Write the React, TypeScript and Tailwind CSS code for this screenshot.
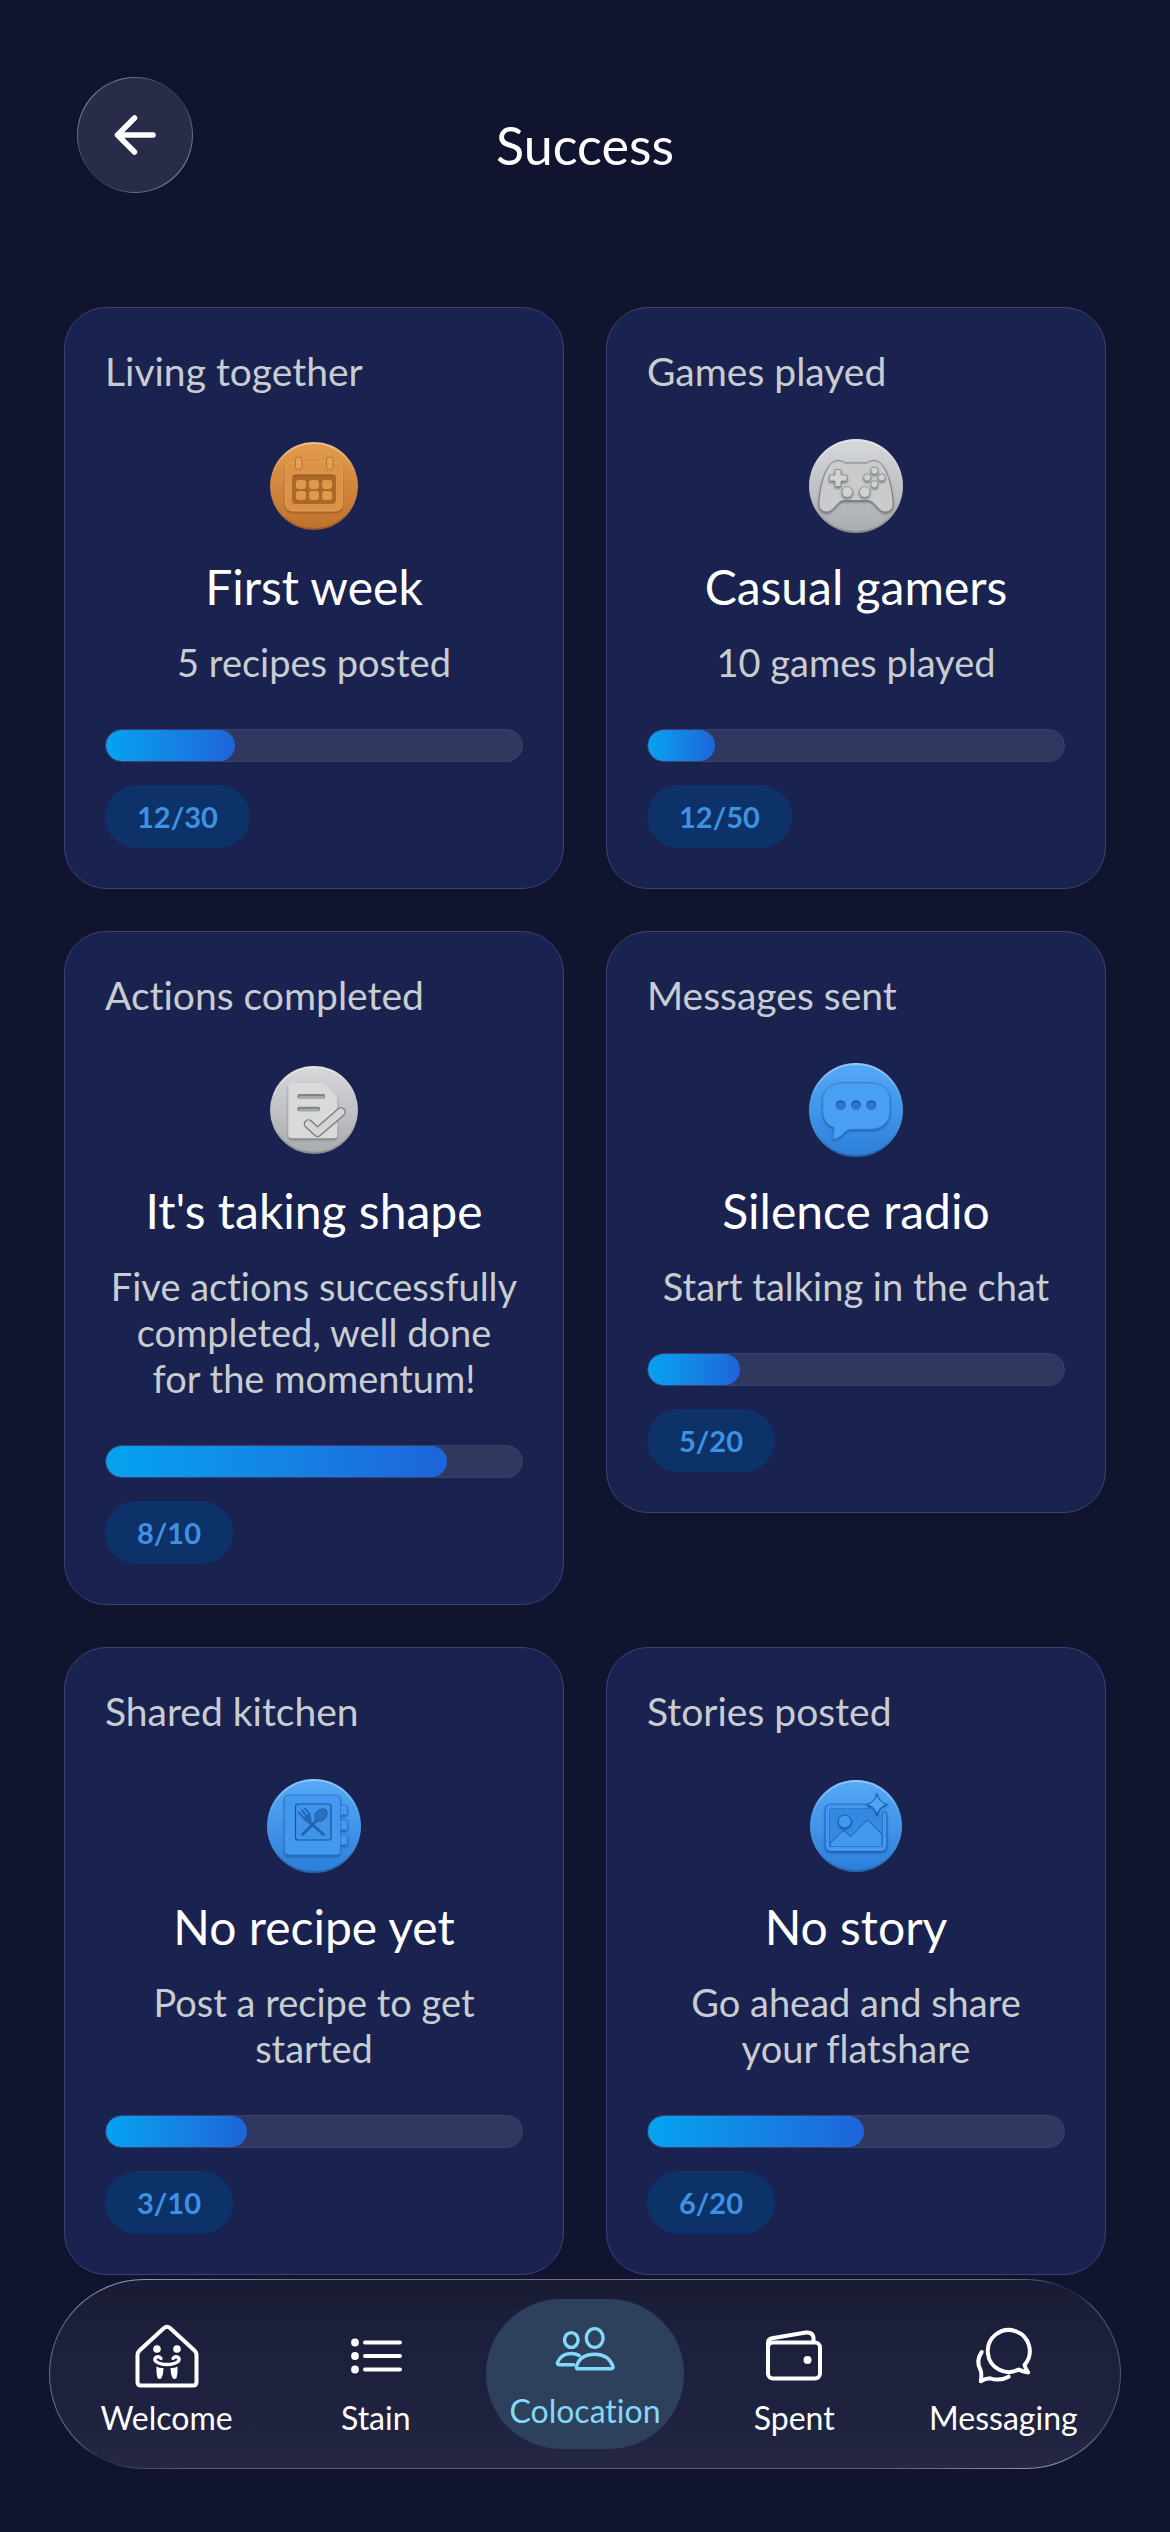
import { useState } from 'react'
import type { FC, ReactNode } from 'react'
import clsx from 'clsx'

type Tone = 'bronze' | 'silver' | 'blue'

interface Achievement {
  id: string
  category: string
  title: string
  description: string
  score: string
  percent: number
  medal: ReactNode
}

interface NavItem {
  id: string
  label: string
  icon: ReactNode
}

const TONES: Record<Tone, { top: string; bottom: string; face: string; line: string; deep: string }> = {
  bronze: { top: '#e39c4e', bottom: '#c0722b', face: '#dc9347', line: '#8f5018', deep: '#ac6829' },
  silver: { top: '#d6d8da', bottom: '#a9acaf', face: '#d0d2d4', line: '#63676b', deep: '#8d9194' },
  blue: { top: '#57aaf6', bottom: '#2c7fda', face: '#4299ef', line: '#15559f', deep: '#2467b4' }
}

const Medal: FC<{ id: string; tone: Tone; radius: number; children: ReactNode }> = ({ id, tone, radius, children }) => {
  const { top, bottom, line } = TONES[tone]
  return (
    <svg className="h-24 w-24" viewBox="0 0 96 96" fill="none" aria-hidden="true">
      <defs>
        <linearGradient id={`${id}-disc`} x1="0" y1="0" x2="0" y2="1">
          <stop offset="0" stopColor={top} />
          <stop offset="1" stopColor={bottom} />
        </linearGradient>
        <linearGradient id={`${id}-rim`} x1="0" y1="0" x2="0" y2="1">
          <stop offset="0" stopColor="#fff" stopOpacity="0.35" />
          <stop offset="0.4" stopColor="#fff" stopOpacity="0" />
          <stop offset="1" stopColor="#000" stopOpacity="0.2" />
        </linearGradient>
        <filter id={`${id}-raise`} x="-20%" y="-20%" width="140%" height="150%">
          <feDropShadow dx="0" dy="1.5" stdDeviation="1.1" floodColor={line} floodOpacity="0.85" />
        </filter>
      </defs>
      <circle cx="48" cy="48" r={radius} fill={`url(#${id}-disc)`} />
      <circle cx="48" cy="48" r={radius - 1} stroke={`url(#${id}-rim)`} strokeWidth="2" />
      {children}
    </svg>
  )
}

const CalendarMedal: FC = () => {
  const c = TONES.bronze
  return (
    <Medal id="calendar" tone="bronze" radius={44}>
      <rect x="19.5" y="24" width="57" height="49" rx="7" fill={c.face} stroke="#eeb170" strokeWidth="0.6" filter="url(#calendar-raise)" />
      <rect x="26" y="37" width="44" height="29" rx="4" fill={c.deep} />
      <path d="M27 38.5 Q28 37 30 37 H66 Q68.5 37 69.5 38.5" stroke={c.line} strokeWidth="1.2" />
      {[42, 53].map((y) =>
        [30, 43, 56].map((x) => (
          <rect key={`${x}-${y}`} x={x} y={y} width="10" height="9" rx="3" fill="#df994e" />
        ))
      )}
      <rect x="29.5" y="19" width="6.5" height="12.5" rx="3" fill="#e3a056" stroke={c.deep} strokeWidth="0.8" />
      <rect x="60.5" y="19" width="6.5" height="12.5" rx="3" fill="#e3a056" stroke={c.deep} strokeWidth="0.8" />
    </Medal>
  )
}

const GamepadMedal: FC = () => {
  const c = TONES.silver
  return (
    <Medal id="gamepad" tone="silver" radius={47}>
      <path
        d="M37 25 C33 22 27 22 24 25 C17 30 12 48 11 64 C10.5 71 14 74 19 74 C26 74 29 62.5 36 62.5 H60 C67 62.5 70 74 77 74 C82 74 85.5 71 85 64 C84 48 79 30 72 25 C69 22 63 22 59 25 Z"
        fill="#c9cbcd"
        stroke="#7d8184"
        strokeWidth="1"
        filter="url(#gamepad-raise)"
      />
      <path
        d="M27 31.5 H33 V37 H39 V43 H33 V48.5 H27 V43 H21.5 V37 H27 Z"
        fill={c.face}
        stroke="#85898c"
        strokeWidth="0.8"
        strokeLinejoin="round"
        filter="url(#gamepad-raise)"
      />
      <g fill={c.face} stroke="#85898c" strokeWidth="0.8" filter="url(#gamepad-raise)">
        <circle cx="66.4" cy="32.6" r="3.6" />
        <circle cx="59.2" cy="39.4" r="3.6" />
        <circle cx="73.7" cy="39.4" r="3.6" />
        <circle cx="66.4" cy="46.2" r="3.6" />
        <circle cx="39.3" cy="54" r="5.4" />
        <circle cx="56.7" cy="54" r="5.4" />
      </g>
    </Medal>
  )
}

const TaskMedal: FC = () => (
  <Medal id="task" tone="silver" radius={44}>
    <path
      d="M26 20.7 H56 Q58 20.7 59.5 22.3 L70 34 Q71.3 35.3 71.3 38 V73 Q71.3 76.3 68 76.3 H26 Q22.3 76.3 22.3 73 V24.5 Q22.3 20.7 26 20.7 Z"
      fill="#d9dadb"
      filter="url(#task-raise)"
    />
    <path d="M33.5 34.3 H57 M33.5 47 H52" stroke="#7f8386" strokeWidth="4.6" strokeLinecap="round" />
    <path d="M34 35.3 H57 M34 48 H52" stroke="#a6a9ab" strokeWidth="2.6" strokeLinecap="round" />
    <path d="M42.5 62 L51.5 70.3 L75 50" stroke="#777b7e" strokeWidth="9.6" strokeLinecap="round" strokeLinejoin="round" />
    <path d="M42.5 62 L51.5 70.3 L75 50" stroke="#d3d5d6" strokeWidth="7" strokeLinecap="round" strokeLinejoin="round" />
  </Medal>
)

const ChatMedal: FC = () => (
  <Medal id="chat" tone="blue" radius={47}>
    <path
      d="M35 20.7 H62 C74 20.7 82 28 82 38 V49 C82 60 74 67.3 62 67.3 H43 Q40 67.3 37 70 Q32 76 26.5 77.3 Q24 77.3 25 74 Q26.5 69 26 65.5 C19 63 14.7 57 14.7 49 V38 C14.7 28 23 20.7 35 20.7 Z"
      fill="#489ff3"
      stroke="#2f7ccd"
      strokeWidth="0.8"
      filter="url(#chat-raise)"
    />
    {[32.7, 48, 63.3].map((x) => (
      <g key={x}>
        <circle cx={x} cy="43" r="4.8" fill="#1c5ca8" />
        <circle cx={x} cy="44" r="3.8" fill="#2f78c9" />
      </g>
    ))}
  </Medal>
)

const RecipeMedal: FC = () => {
  const c = TONES.blue
  return (
    <Medal id="recipe" tone="blue" radius={47}>
      <g fill={c.face} stroke="#2a75c4" strokeWidth="0.8" filter="url(#recipe-raise)">
        <rect x="71" y="27" width="10.5" height="10" rx="2" />
        <rect x="71" y="42" width="10.5" height="10" rx="2" />
        <rect x="71" y="57" width="10.5" height="10" rx="2" />
        <rect x="18.5" y="17" width="56" height="60" rx="4" />
      </g>
      <rect x="29.5" y="26" width="35.5" height="36" rx="2.5" fill="#3f94e9" stroke={c.line} strokeWidth="1.2" />
      <g stroke="#1f62b0" strokeLinecap="round">
        <path d="M43.5 44 L57.5 56.5 M50 43 L36.5 56.5" strokeWidth="2.8" />
        <path d="M33 34.5 L38.5 41 M36 32.5 L41 38.5 M39 30.5 L44 36.5" strokeWidth="1.8" />
      </g>
      <path d="M36.5 40 Q41 46.5 44.5 45 Q47 42 43.5 35.5 Z" fill={c.deep} />
      <ellipse cx="55" cy="37" rx="7" ry="5.2" transform="rotate(-45 55 37)" fill="#2a70c0" stroke={c.line} strokeWidth="0.8" />
    </Medal>
  )
}

const STORY_FRAME = 'M59 28.5 H23 Q19.5 28.5 19.5 32 V67.5 Q19.5 71 23 71 H73 Q76.5 71 76.5 67.5 V36'

const StoryMedal: FC = () => {
  const c = TONES.blue
  return (
    <Medal id="story" tone="blue" radius={46}>
      <path d={STORY_FRAME} stroke="#1d5fae" strokeWidth="5.4" strokeLinecap="round" filter="url(#story-raise)" />
      <path d="M22 31 H62 L74 38 V56 L60 42.5 Q59 41.5 58 42.5 L43 58 L37 53 Q35.5 52 34 53 L22 65 Z" fill="#348ae2" />
      <path
        d="M22 65.3 L34 53.5 Q35.5 52.3 37 53.5 L42.7 58.7 L58 43 Q59.3 41.8 60.5 43 L74 56 V69 H22 Z"
        fill={c.face}
        stroke={c.line}
        strokeWidth="0.9"
      />
      <path d={STORY_FRAME} stroke={c.face} strokeWidth="3.8" strokeLinecap="round" />
      <circle cx="36.7" cy="43.5" r="6.5" fill={c.face} stroke={c.line} strokeWidth="0.9" filter="url(#story-raise)" />
      <path
        d="M69 15.5 Q70.5 24.5 79.5 26.5 Q70.5 28.5 69 37.5 Q67.5 28.5 58.5 26.5 Q67.5 24.5 69 15.5 Z"
        fill="#4fa5f5"
        stroke={c.line}
        strokeWidth="0.9"
        strokeLinejoin="round"
        filter="url(#story-raise)"
      />
    </Medal>
  )
}

const NavIcon: FC<{ children: ReactNode }> = ({ children }) => (
  <svg
    className="h-16 w-16"
    viewBox="0 0 64 64"
    fill="none"
    stroke="currentColor"
    strokeWidth="4"
    strokeLinecap="round"
    strokeLinejoin="round"
    aria-hidden="true"
  >
    {children}
  </svg>
)

const achievements: Achievement[] = [
  {
    id: 'living',
    category: 'Living together',
    title: 'First week',
    description: '5 recipes posted',
    score: '12/30',
    percent: 31,
    medal: <CalendarMedal />
  },
  {
    id: 'games',
    category: 'Games played',
    title: 'Casual gamers',
    description: '10 games played',
    score: '12/50',
    percent: 16,
    medal: <GamepadMedal />
  },
  {
    id: 'actions',
    category: 'Actions completed',
    title: "It's taking shape",
    description: 'Five actions successfully\ncompleted, well done\nfor the momentum!',
    score: '8/10',
    percent: 82,
    medal: <TaskMedal />
  },
  {
    id: 'messages',
    category: 'Messages sent',
    title: 'Silence radio',
    description: 'Start talking in the chat',
    score: '5/20',
    percent: 22,
    medal: <ChatMedal />
  },
  {
    id: 'kitchen',
    category: 'Shared kitchen',
    title: 'No recipe yet',
    description: 'Post a recipe to get\nstarted',
    score: '3/10',
    percent: 34,
    medal: <RecipeMedal />
  },
  {
    id: 'stories',
    category: 'Stories posted',
    title: 'No story',
    description: 'Go ahead and share\nyour flatshare',
    score: '6/20',
    percent: 52,
    medal: <StoryMedal />
  }
]

const navItems: NavItem[] = [
  {
    id: 'welcome',
    label: 'Welcome',
    icon: (
      <NavIcon>
        <path d="M29 4 Q32 1.5 35 4 L59.5 26.5 Q61.5 28.5 61.5 31 V58 Q61.5 61.5 58 61.5 H6 Q2.5 61.5 2.5 58 V31 Q2.5 28.5 4.5 26.5 Z" />
        <g fill="currentColor" stroke="none">
          <circle cx="22" cy="25" r="3.8" />
          <circle cx="42" cy="25" r="3.8" />
          <path d="M21.5 42.5 Q25 44.5 28.5 44 Q28.5 50 26.5 54 Q24.5 56 22.5 54 Q21 49 21.5 42.5 Z" />
          <path d="M42.5 42.5 Q39 44.5 35.5 44 Q35.5 50 37.5 54 Q39.5 56 41.5 54 Q43 49 42.5 42.5 Z" />
        </g>
        <path
          d="M26 34.5 Q24 32 21.5 33 Q18.5 35 21 37.5 Q25 40.5 32 40.5 Q39 40.5 43 37.5 Q45.5 35 42.5 33 Q40 32 38 34.5"
          strokeWidth="3.4"
        />
      </NavIcon>
    )
  },
  {
    id: 'stain',
    label: 'Stain',
    icon: (
      <NavIcon>
        <path d="M21 18.5 H56 M21 32 H56 M21 45.5 H56" />
        <g fill="currentColor" stroke="none">
          <circle cx="11" cy="18.5" r="3.9" />
          <circle cx="11" cy="32" r="3.9" />
          <circle cx="11" cy="45.5" r="3.9" />
        </g>
      </NavIcon>
    )
  },
  {
    id: 'colocation',
    label: 'Colocation',
    icon: (
      <NavIcon>
        <g strokeWidth="3.4">
          <ellipse cx="18.3" cy="23" rx="6.8" ry="7.4" />
          <ellipse cx="41.7" cy="21" rx="8.4" ry="9.4" />
          <path d="M20.5 47.7 H6 Q4 47.7 4.5 45.5 C7 39.5 12 36.5 18.3 36.5 C21.5 36.5 24 37.2 26.3 38.5" />
          <path d="M25 51.7 H58.5 Q60.5 51.7 60 49.5 C57 41 50 37.3 41.7 37.3 C33 37.3 26 41 23.4 49.5 Q23 51.7 25 51.7 Z" />
        </g>
      </NavIcon>
    )
  },
  {
    id: 'spent',
    label: 'Spent',
    icon: (
      <NavIcon>
        <rect x="6" y="18.5" width="52" height="36" rx="5" />
        <path d="M6 23 V19 Q6 15 10 14.3 L44 8.5 Q51 8 51.5 14 V18" />
        <circle cx="45.5" cy="36" r="4" fill="currentColor" stroke="none" />
      </NavIcon>
    )
  },
  {
    id: 'messaging',
    label: 'Messaging',
    icon: (
      <NavIcon>
        <path d="M47.7 45.5 A21 21 0 1 1 53.5 40.9 Q54.5 45 57.2 48.5 Q52 48 47.7 45.5 Z" />
        <path d="M10.7 28 Q4.5 37 9.5 46 Q11 49 9.8 57.2 Q14 54.5 19 54.3 Q29 57.5 37.7 52.7" />
      </NavIcon>
    )
  }
]

const AchievementCard: FC<{ item: Achievement }> = ({ item }) => (
  <article className="flex flex-col rounded-[42px] border border-[#3d4078] bg-[#1a2250] p-10">
    <p className="text-[39px] leading-[46px] text-[#c8cdd1]">{item.category}</p>
    <div className="mt-[44px] flex justify-center">{item.medal}</div>
    <h2 className="mt-[23px] text-center text-[48px] leading-[60px] text-white">{item.title}</h2>
    <p className="mt-[22px] text-center text-[38px] leading-[46px] whitespace-pre-line text-[#c8cdd1]">
      {item.description}
    </p>
    <div
      role="progressbar"
      aria-label={item.category}
      aria-valuenow={item.percent}
      className="mt-[44px] h-[33px] overflow-hidden rounded-full border border-[#3b4070] bg-[#313860]"
    >
      <div
        className="h-full rounded-full bg-linear-to-r from-[#04a3f0] to-[#1e64d8]"
        style={{ width: `${item.percent}%` }}
      />
    </div>
    <span className="mt-[23px] self-start rounded-full bg-[#0d326a] px-8 text-[29px] leading-[63px] font-bold text-[#3f92e2]">
      {item.score}
    </span>
  </article>
)

export default function App() {
  const [activeTab, setActiveTab] = useState('colocation')

  return (
    <div className="flex min-h-screen flex-col bg-[#10142f] font-[Lato,sans-serif] text-white [font-variant-ligatures:none]">
      <header className="grid grid-cols-[116px_1fr_116px] items-start px-[77px] pt-[77px]">
        <button
          type="button"
          aria-label="Back"
          className="flex h-[116px] items-center justify-center rounded-full border border-transparent [background:linear-gradient(#292c48,#292c48)_padding-box,linear-gradient(135deg,#a9acc4,#33365a_45%,#33365a_55%,#a9acc4)_border-box]"
        >
          <svg
            className="h-12 w-12"
            viewBox="0 0 48 48"
            fill="none"
            stroke="currentColor"
            strokeWidth="5.5"
            strokeLinecap="round"
            strokeLinejoin="round"
            aria-hidden="true"
          >
            <path d="M23.5 7 L6.5 24 L23.5 41 M7 24 H42" />
          </svg>
        </button>
        <h1 className="mt-[38px] text-center text-[52px] leading-[60px]">Success</h1>
      </header>

      <main className="mt-[114px] grid grid-cols-2 items-start gap-[42px] px-16">
        {achievements.map((item) => (
          <AchievementCard key={item.id} item={item} />
        ))}
      </main>

      <nav className="mx-[49px] mt-1 mb-16 grid grid-cols-5 rounded-full border border-transparent px-3 py-[19px] [background:linear-gradient(#191b33,#1c203c_30%,#1e223f_70%,#252744)_padding-box,linear-gradient(to_bottom_right,#a9acc4,#6c6e8a_12%,#6c6e8a_44%,#262942_50%,#55586f_56%,#55586f_88%,#a9acc4)_border-box]">
        {navItems.map((item) => {
          const isActive = item.id === activeTab
          return (
            <a
              key={item.id}
              href={`#${item.id}`}
              aria-current={isActive ? 'page' : undefined}
              onClick={() => setActiveTab(item.id)}
              className={clsx(
                'mx-1.5 flex h-[150px] flex-col items-center justify-center gap-2.5 rounded-full text-[32px] leading-10',
                isActive ? 'bg-[#2d415c] text-[#84d8fb]' : 'pt-3.5 text-white'
              )}
            >
              {item.icon}
              {item.label}
            </a>
          )
        })}
      </nav>
    </div>
  )
}
